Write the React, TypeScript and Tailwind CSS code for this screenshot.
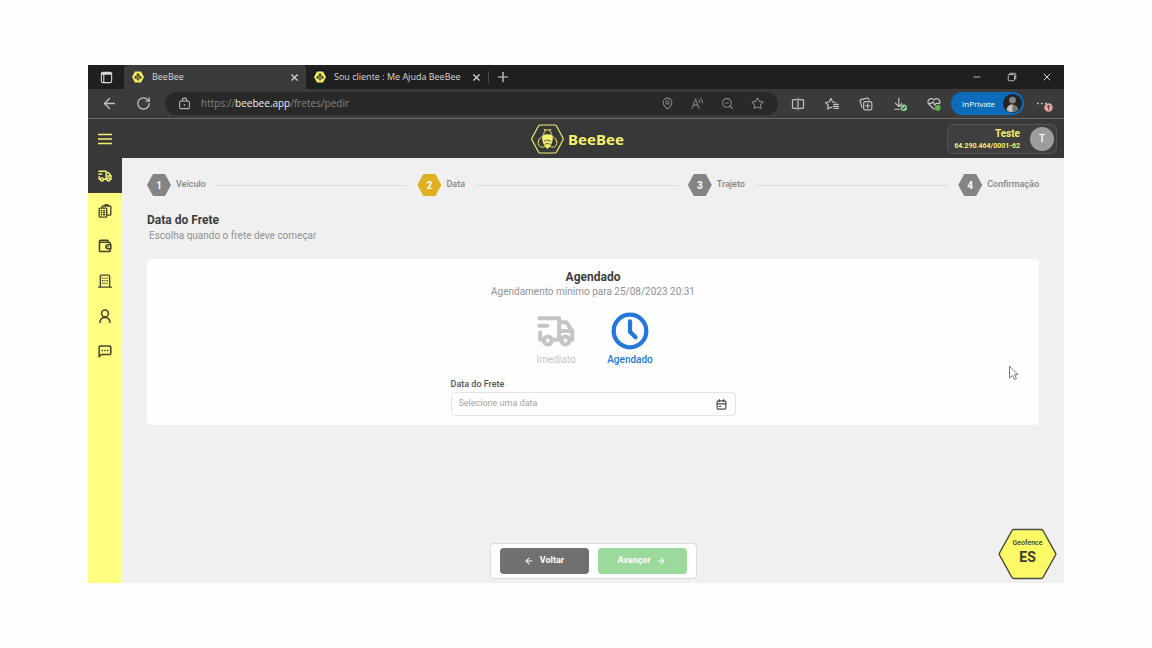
import type { ReactNode } from 'react';
import {
    ArrowLeft,
    ArrowRight,
    MapPin,
    Minus,
    Plus,
    RotateCw,
    Star,
    X,
    ZoomOut,
} from 'lucide-react';

type IconProps = { className?: string };

const Svg = ({ className, width = 2, children }: IconProps & { width?: number; children: ReactNode }) => (
    <svg
        viewBox="0 0 24 24"
        fill="none"
        stroke="currentColor"
        strokeWidth={width}
        strokeLinecap="round"
        strokeLinejoin="round"
        className={className}
        aria-hidden="true"
    >
        {children}
    </svg>
);

const TruckIcon = ({ className }: IconProps) => (
    <Svg className={className} width={2.5}>
        <path d="M1.500 4h12.500v13.500H10M1.500 8.700h5M2 13v4.500h1.500M14 6.500h4.500l3.800 5.500v5.500H21M14 12h8M14 17.500h1" />
        <circle cx="6.800" cy="18" r="2.500" />
        <circle cx="18" cy="18" r="2.500" />
    </Svg>
);

const OrdersIcon = ({ className }: IconProps) => (
    <Svg className={className} width={2.3}>
        <rect x="2" y="7" width="13" height="15.500" rx="1.500" />
        <path d="M7 6.500V5a1.500 1.500 0 0 1 1.500-1.500H20.500A1.500 1.500 0 0 1 22 5v12.500a1.500 1.500 0 0 1-1.500 1.500H16M11 3c0-2.500 7-2.500 7 0" />
        <path d="M5.500 11.500h1M9.500 11.500h2M5.500 15h1M9.500 15h2M5.500 18.500h1M9.500 18.500h2" />
    </Svg>
);

const WalletIcon = ({ className }: IconProps) => (
    <Svg className={className} width={2.7}>
        <path d="M21 9V7.500a2 2 0 0 0-2-2H4.500a1.600 1.600 0 0 1 0-3.300H17v3M2.500 4v15.500a2 2 0 0 0 2 2H19a2 2 0 0 0 2-2V18" />
        <path d="M22 10h-5a3.300 3.300 0 0 0 0 6.600h5zM17.500 13.300h.1" />
    </Svg>
);

const BuildingIcon = ({ className }: IconProps) => (
    <Svg className={className} width={2.3}>
        <path d="M1 22.500h22M4 22V4a2 2 0 0 1 2-2h12a2 2 0 0 1 2 2v18" />
        <path d="M8 7h.5M15.500 7h.5M8 11.500h.5M15.500 11.500h.5M8 16h.5M15.500 16h.5M12 7v.1M12 11.500v.1M12 16v.1" />
    </Svg>
);

const UserIcon = ({ className }: IconProps) => (
    <Svg className={className} width={2.700}>
        <circle cx="12" cy="7.500" r="5.800" />
        <path d="M3.500 23c.3-5.500 3.500-8.500 8.500-8.500s8.200 3 8.500 8.500" />
    </Svg>
);

const ChatIcon = ({ className }: IconProps) => (
    <Svg className={className} width={2.600}>
        <path d="M2 22V5.500a2 2 0 0 1 2-2h16a2 2 0 0 1 2 2V16a2 2 0 0 1-2 2H6z" />
        <path d="M7 11h.5M11.800 11h.5M16.500 11h.5" />
    </Svg>
);

const CalendarIcon = ({ className }: IconProps) => (
    <Svg className={className} width={2.600}>
        <rect x="2.500" y="4" width="19" height="18" rx="2.500" />
        <path d="M2.500 10.500h19M7.500 1.500V6M16.500 1.500V6M7 16h3.500" />
    </Svg>
);

const ClockIcon = ({ className }: IconProps) => (
    <Svg className={className} width={2.700}>
        <circle cx="12" cy="12" r="10.300" />
        <path d="M12 6v6.500l3.500 3.500" />
    </Svg>
);

const LockIcon = ({ className }: IconProps) => (
    <Svg className={className} width={2}>
        <rect x="3" y="7.500" width="18" height="14" rx="2" />
        <path d="M8 7.500V5a3 3 0 0 1 3-3h2a3 3 0 0 1 3 3v2.500" />
        <path d="M12 14.500v.1" strokeWidth="3" />
    </Svg>
);

const TabActionsIcon = ({ className }: IconProps) => (
    <Svg className={className}>
        <rect x="2.500" y="2.500" width="19" height="19" rx="3" />
        <path d="M3.500 5h17" strokeWidth="4" />
        <path d="M7 6v15" />
    </Svg>
);

const ReadAloudIcon = ({ className }: IconProps) => (
    <Svg className={className} width={2}>
        <path d="m2 21 6.500-17L15 21M4.500 15h8M14.500 6c1.500 1 2 2.200 2 4M17 2.500c3 1.800 4.500 4.500 4.500 8" />
    </Svg>
);

const SplitIcon = ({ className }: IconProps) => (
    <Svg className={className}>
        <path d="M9.500 4.500h-5a2 2 0 0 0-2 2v11a2 2 0 0 0 2 2h5M14.500 4.500h5a2 2 0 0 1 2 2v11a2 2 0 0 1-2 2h-5M12 2v20" />
    </Svg>
);

const FavoritesIcon = ({ className }: IconProps) => (
    <Svg className={className}>
        <path d="M18 9 13 8.500 10 2.500 7 8.500l-6 1 4.500 4.500-1 6.500L10 17.500l2 1M15 12.500h8M14 16h9M16 19.500h7" />
    </Svg>
);

const CollectionsIcon = ({ className }: IconProps) => (
    <Svg className={className} width={2}>
        <rect x="8" y="8" width="14" height="14" rx="2.500" />
        <path d="M15 11.500v7M11.500 15h7M5 17.500 2 7a2 2 0 0 1 1.500-2.500L14 2a2 2 0 0 1 2.500 1.500L17 5" />
    </Svg>
);

const DownloadIcon = ({ className }: IconProps) => (
    <Svg className={className} width={2}>
        <path d="M10 2v14M4 10.500l6 6 5-5M3 21h8" />
        <circle cx="18.500" cy="18.500" r="5.500" fill="#8fd49c" stroke="none" />
        <path d="m16 18.500 2 2 3-4" stroke="#2b5a35" />
    </Svg>
);

const HealthIcon = ({ className }: IconProps) => (
    <Svg className={className} width={2}>
        <path d="m12 21-9-9C-1 6 6-.5 12 5c6-5.500 13 1 9 7M2 11h6l2.500-3 3 6 2-3H21" />
        <circle cx="18.500" cy="18.500" r="5" fill="#5cb648" stroke="none" />
    </Svg>
);

const RestoreIcon = ({ className }: IconProps) => (
    <Svg className={className}>
        <rect x="3" y="6" width="15" height="15" rx="2.500" />
        <path d="M7 3h11a3 3 0 0 1 3 3v11" />
    </Svg>
);

const BeeLogo = ({ className }: IconProps) => (
    <svg viewBox="0 0 98 90" fill="none" stroke="#f5f070" strokeWidth="3.500" strokeLinejoin="round" className={className} aria-hidden="true">
        <path d="M27 3h44q3 0 5 3l19 35q2 4 0 8L76 84q-2 3-5 3H27q-3 0-5-3L3 49q-2-4 0-8L22 6q2-3 5-3Z" />
        <path d="M38 16c3 3 19 3 22 0M41 17v6c-4 4-4 7-3 9M57 17v6c4 4 4 7 3 9" strokeWidth="3" />
        <path d="M34 38C24 42 19 52 22 62c2 8 14 10 22 4M64 38c10 4 15 14 12 24-2 8-14 10-22 4" strokeWidth="3" />
        <path d="M34 34q15-6 30 0c3 15-2 30-15 41-13-11-18-26-15-41Z" fill="#f5f070" stroke="none" />
        <path d="M38 52q11-8 22 0M41 61q8-6 16 0" stroke="#383838" strokeWidth="2.500" />
    </svg>
);

const BeeFavicon = () => (
    <svg viewBox="0 0 24 24" className="size-3 shrink-0" aria-hidden="true">
        <path d="M6 1h12l6 11-6 11H6L0 12Z" fill="#f3ee62" />
        <path d="M9 5h6l-1 3 5 3v4l-4 1-3 4-3-4-4-1v-4l5-3Z" fill="#4b4925" />
        <path d="M8 11.500h8M9 15h6" stroke="#f3ee62" strokeWidth="1.200" />
    </svg>
);

const tabs = [
    { title: 'BeeBee', active: true },
    { title: 'Sou cliente : Me Ajuda BeeBee', active: false },
];

const steps = [
    { title: 'Veículo', active: false },
    { title: 'Data', active: true },
    { title: 'Trajeto', active: false },
    { title: 'Confirmação', active: false },
];

const menu = [
    { icon: TruckIcon, name: 'Pedir frete', active: true },
    { icon: OrdersIcon, name: 'Fretes', active: false },
    { icon: WalletIcon, name: 'Carteira', active: false },
    { icon: BuildingIcon, name: 'Empresa', active: false },
    { icon: UserIcon, name: 'Perfil', active: false },
    { icon: ChatIcon, name: 'Ajuda', active: false },
];

const browserActions = [
    { icon: SplitIcon, name: 'Split screen' },
    { icon: FavoritesIcon, name: 'Favorites' },
    { icon: CollectionsIcon, name: 'Collections' },
    { icon: DownloadIcon, name: 'Downloads' },
    { icon: HealthIcon, name: 'Browser essentials' },
];

const addressActions = [
    { icon: MapPin, name: 'Location' },
    { icon: ReadAloudIcon, name: 'Read aloud' },
    { icon: ZoomOut, name: 'Zoom' },
    { icon: Star, name: 'Add to favorites' },
];

function TitleBar() {
    return (
        <div className="flex h-6 items-stretch bg-[#1f1f1f] text-[#d8d8d8]">
            <button aria-label="Tab actions" className="flex w-9 items-center justify-center">
                <TabActionsIcon className="size-[13px]" />
            </button>
            {tabs.map((tab) => (
                <div
                    key={tab.title}
                    className={`flex w-[182px] items-center gap-2 rounded-t pr-1.5 pl-2 ${tab.active ? 'bg-[#3b3b3b]' : ''}`}
                >
                    <BeeFavicon />
                    <span className="flex-1 truncate text-[9px]">{tab.title}</span>
                    <button aria-label={`Close ${tab.title}`}>
                        <X className="size-[11px]" strokeWidth={2.5} />
                    </button>
                </div>
            ))}
            <div className="my-1.5 w-px bg-[#4a4a4a]" />
            <button aria-label="New tab" className="flex w-7 items-center justify-center">
                <Plus className="size-4" strokeWidth={1.8} />
            </button>
            <div className="ml-auto flex">
                <button aria-label="Minimize" className="flex w-[35px] items-center justify-center">
                    <Minus className="size-2.5" />
                </button>
                <button aria-label="Restore" className="flex w-[35px] items-center justify-center">
                    <RestoreIcon className="size-2.5" />
                </button>
                <button aria-label="Close window" className="flex w-[35px] items-center justify-center">
                    <X className="size-3" strokeWidth={2} />
                </button>
            </div>
        </div>
    );
}

function AddressBar() {
    return (
        <div className="flex h-[30px] items-center border-b border-[#6a6a6a] bg-[#3b3b3b] pl-1 text-[#c4c4c4]">
            <button aria-label="Back" className="flex w-[34px] justify-center">
                <ArrowLeft className="size-[17px]" strokeWidth={1.8} />
            </button>
            <button aria-label="Reload" className="flex w-[34px] justify-center">
                <RotateCw className="size-[15px]" strokeWidth={2} />
            </button>
            <div className="mr-[3px] ml-[5px] flex h-[23px] flex-1 items-center rounded-full bg-[#292929] pr-1.5 pl-[13px] text-[#858585]">
                <LockIcon className="size-[13px] text-[#b5b5b5]" />
                <p className="ml-2.5 flex-1 text-[10px]">
                    https://<span className="text-[#efefef]">beebee.app</span>/fretes/pedir
                </p>
                {addressActions.map((action) => (
                    <button key={action.name} aria-label={action.name} className="flex w-[30px] justify-center">
                        <action.icon className="size-[13px]" strokeWidth={2} />
                    </button>
                ))}
            </div>
            {browserActions.map((action) => (
                <button key={action.name} aria-label={action.name} className="flex w-[34px] justify-center">
                    <action.icon className="size-3.5" />
                </button>
            ))}
            <button className="flex h-[23px] w-[73px] items-center justify-between rounded-full bg-[#0d6cb9] pr-0.5 pl-[11px] text-[8px] text-white">
                InPrivate
                <svg viewBox="0 0 20 20" className="size-[19px]" aria-hidden="true">
                    <circle cx="10" cy="10" r="10" fill="#242424" />
                    <circle cx="10" cy="6.500" r="3.500" fill="#858585" />
                    <path d="M4 17c0-8 12-8 12 0-3 3-9 3-12 0Z" fill="#777" />
                    <path d="M4 17c0-4 3-6 6-6v8c-2 0-4-.5-6-2Z" fill="#c5c5c5" />
                </svg>
            </button>
            <button aria-label="Settings and more" className="flex w-10 justify-center">
                <svg viewBox="0 0 18 16" className="h-4 w-[18px]" aria-hidden="true">
                    <path d="M2 7.500h1.500M6 7.500h1.500M10 7.500h1.500" stroke="#d5d5d5" strokeWidth="1.500" />
                    <circle cx="13.500" cy="11.500" r="4.300" fill="#e0a39d" />
                    <path d="M13.500 14V9.500M12 11l1.500-1.500L15 11" stroke="#75413d" fill="none" />
                </svg>
            </button>
        </div>
    );
}

function AppHeader() {
    return (
        <header className="grid h-[39px] grid-cols-[1fr_auto_1fr] items-center bg-[#383838] pr-[7px] pl-2.5 text-[#f5f070]">
            <button aria-label="Menu" className="w-3.5">
                <svg viewBox="0 0 14 12" className="h-3 w-3.5" aria-hidden="true">
                    <path d="M0 1.500h14M0 6h14M0 10.500h14" stroke="currentColor" strokeWidth="1.700" />
                </svg>
            </button>
            <a href="#" className="flex items-center gap-1">
                <BeeLogo className="h-[30px] w-[33px]" />
                <span className="font-['Noto_Sans','Open_Sans',sans-serif] text-[15px] leading-5 font-bold">BeeBee</span>
            </a>
            <div className="flex h-[30px] w-[110px] items-center justify-end gap-2.5 justify-self-end rounded-md border border-[#545454] bg-[#3f3f3f] pr-0.5">
                <div className="text-right font-bold">
                    <p className="text-[10px] leading-[14px]">Teste</p>
                    <p className="text-[7px] leading-[10px]">64.290.464/0001-62</p>
                </div>
                <span className="flex size-6 items-center justify-center rounded-full bg-[#9d9d9d] text-[10px] font-medium text-white">T</span>
            </div>
        </header>
    );
}

function Sidebar() {
    return (
        <nav className="w-[34px] shrink-0 bg-[#fffe80]">
            {menu.map((item) => (
                <a
                    key={item.name}
                    href="#"
                    aria-label={item.name}
                    className={`flex h-[35px] items-center justify-center ${item.active ? 'bg-[#383838] text-[#f5f070]' : 'text-[#45452f]'}`}
                >
                    <item.icon className="size-3.5" />
                </a>
            ))}
        </nav>
    );
}

function Steps() {
    return (
        <ol className="flex">
            {steps.map((step, idx) => (
                <li key={step.title} className="flex items-center not-last:flex-1">
                    <span
                        className={`flex h-[22px] w-6 items-center justify-center text-[10px] font-bold text-white [clip-path:polygon(25%_0,75%_0,100%_50%,75%_100%,25%_100%,0_50%)] ${step.active ? 'bg-[#dfb120]' : 'bg-[#848484]'}`}
                    >
                        {idx + 1}
                    </span>
                    <span className="ml-[5px] text-[9px] font-medium text-[#858585]">{step.title}</span>
                    {idx < steps.length - 1 && <span className="mx-2.5 h-px flex-1 bg-[#dcdcdc]" />}
                </li>
            ))}
        </ol>
    );
}

function DateCard() {
    return (
        <section className="mt-[15px] flex flex-col items-center rounded-sm bg-[#fefefe] pt-2.5 pb-[9px]">
            <h2 className="text-xs leading-4 font-bold text-[#3d3d3d]">Agendado</h2>
            <p className="text-[10px] leading-[14px] text-[#929292]">Agendamento mínimo para 25/08/2023 20:31</p>
            <div className="mt-[13px] flex">
                <button className="flex w-[74px] flex-col items-center gap-[3px] text-[#c5c5c5]">
                    <TruckIcon className="size-[38px]" />
                    <span className="text-[10px] leading-[14px]">Imediato</span>
                </button>
                <button className="flex w-[74px] flex-col items-center gap-[3px] text-[#2577dc]">
                    <ClockIcon className="size-[38px]" />
                    <span className="text-[10px] leading-[14px] font-medium">Agendado</span>
                </button>
            </div>
            <div className="mt-[11px] w-[285px]">
                <label htmlFor="data-frete" className="block text-[9px] leading-3 font-medium text-[#555]">
                    Data do Frete
                </label>
                <div className="mt-0.5 flex h-6 items-center rounded-sm border border-[#e4e4e4] pr-2 pl-[7px]">
                    <input
                        id="data-frete"
                        placeholder="Selecione uma data"
                        className="min-w-0 flex-1 text-[9px] outline-none placeholder:text-[#a3a3a3]"
                    />
                    <CalendarIcon className="size-[11px] text-[#4a4a4a]" />
                </div>
            </div>
        </section>
    );
}

function GeofenceBadge() {
    return (
        <div className="absolute right-[7px] bottom-[3px] grid h-[52px] w-[59px] place-items-center">
            <svg viewBox="0 0 59 52" className="col-start-1 row-start-1 size-full" aria-hidden="true">
                <path d="M16 1.500h27q1.500 0 2 1L57.500 25q.5 1 0 2L45 49.500q-.5 1-2 1H16q-1.500 0-2-1L1.500 27q-.5-1 0-2L14 2.500q.5-1 2-1Z" fill="#fbfa66" stroke="#4b4b40" strokeWidth="1.500" />
            </svg>
            <div className="col-start-1 row-start-1 pb-1 text-center text-[#3b3b2c]">
                <p className="text-[7px] leading-[10px] font-medium">Geofence</p>
                <p className="text-sm leading-[18px] font-bold">ES</p>
            </div>
        </div>
    );
}

export default function App() {
    return (
        <div className="flex min-h-screen flex-col bg-[#fdfdfd] px-[88px] py-[65px] font-[Roboto,sans-serif]">
            <div className="flex flex-1 flex-col">
                <div className="font-['Open_Sans','Noto_Sans',sans-serif]">
                    <TitleBar />
                    <AddressBar />
                </div>
                <AppHeader />
                <div className="flex flex-1">
                    <Sidebar />
                    <main className="relative flex flex-1 flex-col bg-[#f0f0f0] px-[25px] pt-4 pb-1">
                        <Steps />
                        <h1 className="mt-4 text-xs leading-4 font-bold text-[#3d3d3d]">Data do Frete</h1>
                        <p className="pl-0.5 text-[10px] leading-4 text-[#929292]">Escolha quando o frete deve começar</p>
                        <DateCard />
                        <div className="mt-auto flex h-9 items-center gap-[9px] self-center rounded-sm border border-[#dadada] bg-[#fdfdfd] px-[9px]">
                            <button className="flex h-[26px] w-[89px] items-center justify-center gap-1.5 rounded-sm bg-[#707070] text-[9px] font-bold text-white">
                                <ArrowLeft className="size-2.5" strokeWidth={2.5} />
                                Voltar
                            </button>
                            <button className="flex h-[26px] w-[89px] items-center justify-center gap-1.5 rounded-sm bg-[#9bd99c] text-[9px] font-bold text-white">
                                Avançar
                                <ArrowRight className="size-2.5" strokeWidth={2.5} />
                            </button>
                        </div>
                        <GeofenceBadge />
                        <svg viewBox="0 0 11 16" className="absolute top-[207px] right-[45px] h-4 w-[11px]" aria-hidden="true">
                            <path d="M1.500 1v12l3-2.500 2 4 2-1-2-3.800h3.500Z" fill="#fff" stroke="#777" />
                        </svg>
                    </main>
                </div>
            </div>
        </div>
    );
}
